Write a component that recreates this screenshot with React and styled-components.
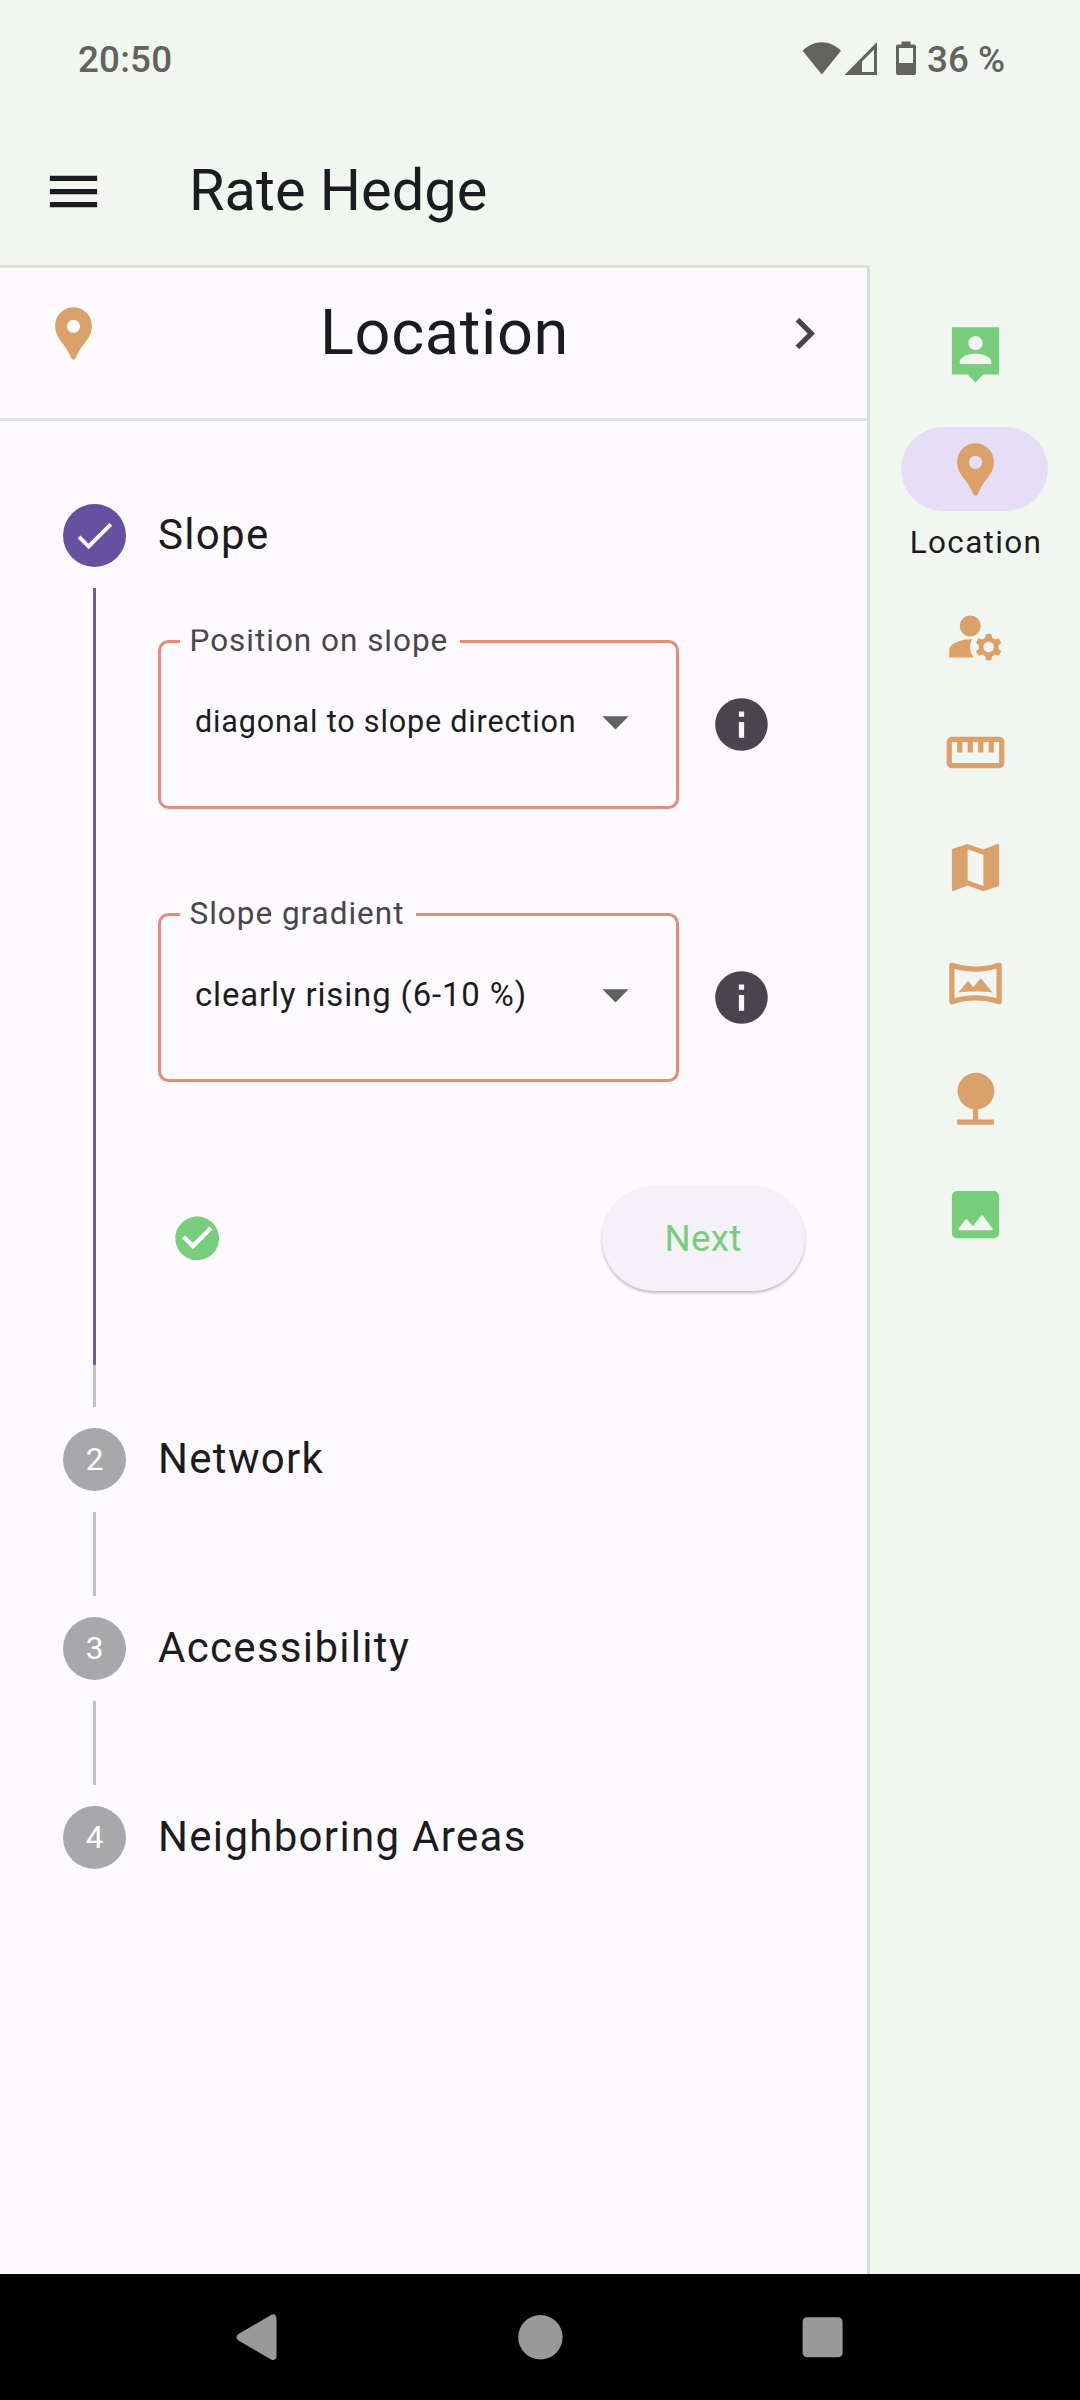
import React from "react";
import styled, { createGlobalStyle } from "styled-components";
import {
  MdMenu,
  MdLocationPin,
  MdChevronRight,
  MdArrowDropDown,
  MdInfo,
  MdCheck,
  MdCheckCircle,
  MdManageAccounts,
  MdStraighten,
  MdMap,
  MdOutlineVrpano,
  MdNature,
} from "react-icons/md";

const color = {
  surface: "#f1f6f0",
  panel: "#fdfbff",
  ink: "#1c1b1f",
  inkSoft: "#49454f",
  status: "#62625e",
  green: "#79ce7d",
  orange: "#daa16b",
  purple: "#6551a0",
  pill: "#e6def6",
  grey: "#a8a7aa",
  line: "#c2c2c2",
  divider: "#dfdfe0",
  field: "#e98a77",
};

const Global = createGlobalStyle`
  * { box-sizing: border-box; }
  body { margin: 0; background: ${color.surface}; }
  svg { display: block; flex: none; }
`;

const Screen = styled.div`
  width: 1080px;
  height: 2400px;
  display: flex;
  flex-direction: column;
  overflow: hidden;
  background: ${color.surface};
  color: ${color.ink};
  font-family: Roboto, "Liberation Sans", sans-serif;
`;

const StatusBar = styled.div`
  flex: none;
  height: 118px;
  padding: 38px 75px 0 78px;
  display: flex;
  justify-content: space-between;
  color: ${color.status};
  font-size: 36.75px;
  font-weight: 500;
  line-height: 43px;
`;

const Clock = styled.span`
  letter-spacing: 0.2px;
`;

const StatusIcons = styled.div`
  display: flex;
  align-items: flex-start;
  svg { margin-top: 3px; }
`;

const BatteryText = styled.span`
  margin-left: 11px;
`;

const AppBar = styled.header`
  flex: none;
  height: 147px;
  padding: 0 42px;
  display: flex;
  align-items: center;
  gap: 84px;
`;

const AppTitle = styled.h1`
  margin: 0 0 3px;
  font-size: 57.75px;
  font-weight: 400;
  line-height: 74px;
`;

const Body = styled.div`
  flex: 1;
  min-height: 0;
  display: flex;
`;

const Panel = styled.main`
  width: 870px;
  border-top: 3px solid ${color.divider};
  border-right: 3px solid #dadcda;
  background: ${color.panel};
`;

const PanelHeader = styled.div`
  height: 153px;
  padding: 0 31px 20px 42px;
  display: flex;
  align-items: center;
  justify-content: space-between;
  border-bottom: 3px solid ${color.divider};
`;

const PanelTitle = styled.h2`
  margin: 0 0 0 11px;
  font-size: 63px;
  font-weight: 400;
  line-height: 84px;
  letter-spacing: 0.66px;
`;

const Stepper = styled.div`
  padding: 83px 62.5px 0 63px;
  display: flex;
  flex-direction: column;
  gap: 21px;
`;

const StepHead = styled.div`
  height: 63px;
  display: flex;
  align-items: center;
  gap: 32px;
`;

const Dot = styled.span`
  flex: none;
  width: 63px;
  height: 63px;
  border-radius: 50%;
  display: flex;
  align-items: center;
  justify-content: center;
  background: ${(p) => (p.$done ? color.purple : color.grey)};
  color: #fff;
  font-size: 31.5px;
  line-height: 36px;
`;

const StepLabel = styled.span`
  margin-bottom: 1px;
  font-size: 42px;
  line-height: 60px;
  letter-spacing: 1.31px;
`;

const StepBody = styled.div`
  display: flex;
  height: ${(p) => p.$height}px;
`;

const Track = styled.div`
  flex: none;
  width: 63px;
  display: flex;
  flex-direction: column;
  align-items: center;
`;

const Segment = styled.span`
  width: 3px;
  flex: ${(p) => (p.$height ? "none" : 1)};
  height: ${(p) => (p.$height ? `${p.$height}px` : "auto")};
  background: ${(p) => (p.$done ? "#6f5ca6" : color.line)};
`;

const StepContent = styled.div`
  flex: 1;
  padding: 42px 0 0 32px;
`;

const FieldRow = styled.div`
  width: 615px;
  height: 273px;
  display: flex;
  align-items: flex-start;
  justify-content: space-between;
`;

const Field = styled.fieldset`
  width: 521px;
  height: 179px;
  min-width: 0;
  margin: 0;
  padding: 37px 29px 0 34px;
  border: 3px solid ${color.field};
  border-radius: 10.5px;
`;

const Legend = styled.legend`
  margin-left: -15px;
  padding: 0 12px 0 9.5px;
  height: 23px;
  clip-path: ${(p) => (p.$clipped ? "inset(-0.5px 0 -20px 0)" : "none")};
  color: ${color.inkSoft};
  font-size: 31.5px;
  line-height: 21px;
  letter-spacing: 0.98px;
`;

const FieldValue = styled.div`
  height: 63px;
  display: flex;
  align-items: center;
  justify-content: space-between;
  color: ${color.ink};
  font-size: ${(p) => p.$size}px;
  letter-spacing: ${(p) => p.$track}px;
  white-space: nowrap;
`;

const InfoSlot = styled.span`
  padding-top: 63px;
  color: ${color.inkSoft};
`;

const Actions = styled.div`
  height: 105px;
  margin-top: 10px;
  padding-left: 12.5px;
  display: flex;
  align-items: center;
  justify-content: space-between;
`;

const NextButton = styled.button`
  width: 203px;
  height: 105px;
  padding: 0;
  border: 0;
  border-radius: 53px;
  background: #f4f1f9;
  box-shadow: 0 2px 3px rgba(0, 0, 0, 0.26);
  color: ${color.green};
  font: 400 36.75px/52px Roboto, sans-serif;
  letter-spacing: 0.26px;
`;

const Rail = styled.nav`
  width: 210px;
  padding: 46.5px 1px 0 0;
  display: flex;
  flex-direction: column;
  align-items: center;
  gap: 31.5px;
`;

const RailItem = styled.div`
  display: flex;
  flex-direction: column;
  align-items: center;
  color: ${(p) => (p.$done ? color.green : color.orange)};
`;

const RailPill = styled.span`
  width: 147px;
  height: 84px;
  padding-left: 1px;
  border-radius: 42px;
  display: flex;
  align-items: center;
  justify-content: center;
  background: ${(p) => (p.$active ? color.pill : "transparent")};
`;

const RailLabel = styled.span`
  height: 52px;
  padding: 11px 0 0 3px;
  color: ${color.ink};
  font-size: 31.5px;
  line-height: 42px;
  letter-spacing: 1.31px;
`;

const NavBar = styled.footer`
  flex: none;
  height: 126px;
  padding: 0 230px;
  display: flex;
  align-items: center;
  justify-content: space-between;
  background: #000;
  color: #999;
`;

const WifiIcon = () => (
  <svg width="40" height="34" viewBox="0 0 40 34" fill="currentColor">
    <path d="M19.800 33.500 0.600 9.800C6 4.200 12.700 1.200 19.800 1.200S33.600 4.200 39 9.800Z" />
  </svg>
);

const SignalGlyph = styled.svg`
  margin-left: 2px;
`;

const SignalIcon = () => (
  <SignalGlyph width="34" height="34" viewBox="0 0 34 34" fill="currentColor" fillRule="evenodd">
    <path d="M33 1V34H0.500ZM30 8.500 18 20.500V31H30Z" />
  </SignalGlyph>
);

const BatteryGlyph = styled.svg`
  margin-left: 18px;
`;

const BatteryIcon = () => (
  <BatteryGlyph width="20" height="34" viewBox="0 0 20 34" fill="currentColor" fillRule="evenodd">
    <path d="M5.500 0.500h9V3.500H18a2 2 0 0 1 2 2V32a2 2 0 0 1-2 2H2a2 2 0 0 1-2-2V5.500a2 2 0 0 1 2-2H5.500ZM3 7V22H17V7Z" />
  </BatteryGlyph>
);

const PersonPinSharp = () => (
  <svg width="63" height="63" viewBox="0 0 24 24" fill="currentColor">
    <path d="M21 2H3v18h6l3 3 3-3h6V2zm-9 3.3c1.49 0 2.7 1.21 2.7 2.7s-1.21 2.7-2.7 2.7S9.3 9.49 9.3 8s1.21-2.7 2.7-2.7zM18 16H6v-.9c0-2 4-3.1 6-3.1s6 1.1 6 3.1v.9z" />
  </svg>
);

const ImageRounded = () => (
  <svg width="63" height="63" viewBox="0 0 24 24" fill="currentColor">
    <path d="M21 19V5c0-1.1-.9-2-2-2H5c-1.1 0-2 .9-2 2v14c0 1.1.9 2 2 2h14c1.1 0 2-.9 2-2zM8.9 13.98l2.1 2.53 3.1-3.99c.2-.26.6-.26.8.01l3.51 4.68c.25.33.01.8-.4.8H6.02c-.42 0-.65-.48-.39-.81L8.12 14c.19-.26.57-.27.78-.02z" />
  </svg>
);

const BackIcon = () => (
  <svg width="52" height="52" viewBox="0 0 52 52" fill="currentColor">
    <path d="M41 3.900c3-1.600 5.500.3 5.500 3.600V44.900c0 3.300-2.500 5.200-5.500 3.600L8.500 29.400c-2.600-1.500-2.600-4.900 0-6.400Z" />
  </svg>
);

const HomeIcon = () => (
  <svg width="52" height="52" viewBox="0 0 52 52" fill="currentColor">
    <circle cx="26.400" cy="26.200" r="22.200" />
  </svg>
);

const RecentsIcon = () => (
  <svg width="52" height="52" viewBox="0 0 52 52" fill="currentColor">
    <rect x="4.600" y="6.300" width="40" height="40" rx="4.500" />
  </svg>
);

const railItems = [
  { Icon: PersonPinSharp, done: true },
  { Icon: MdLocationPin, label: "Location" },
  { Icon: MdManageAccounts },
  { Icon: MdStraighten },
  { Icon: MdMap },
  { Icon: MdOutlineVrpano },
  { Icon: MdNature },
  { Icon: ImageRounded, done: true },
];

const fields = [
  { label: "Position on slope", value: "diagonal to slope direction", size: 30.5, track: 0.84, clipped: true },
  { label: "Slope gradient", value: "clearly rising (6-10 %)", size: 32.9, track: 0.88, clipped: false },
];

const steps = ["Network", "Accessibility", "Neighboring Areas"];

export default function App() {
  return (
    <Screen>
      <Global />
      <StatusBar>
        <Clock>20:50</Clock>
        <StatusIcons>
          <WifiIcon />
          <SignalIcon />
          <BatteryIcon />
          <BatteryText>36 %</BatteryText>
        </StatusIcons>
      </StatusBar>
      <AppBar>
        <MdMenu size={63} />
        <AppTitle>Rate Hedge</AppTitle>
      </AppBar>
      <Body>
        <Panel>
          <PanelHeader>
            <MdLocationPin size={63} color={color.orange} />
            <PanelTitle>Location</PanelTitle>
            <MdChevronRight size={63} color={color.inkSoft} />
          </PanelHeader>
          <Stepper>
            <StepHead>
              <Dot $done>
                <MdCheck size={47} />
              </Dot>
              <StepLabel>Slope</StepLabel>
            </StepHead>
            <StepBody $height={819}>
              <Track>
                <Segment $done />
                <Segment $height={42} />
              </Track>
              <StepContent>
                {fields.map((f) => (
                  <FieldRow key={f.label}>
                    <Field>
                      <Legend $clipped={f.clipped}>{f.label}</Legend>
                      <FieldValue $size={f.size} $track={f.track}>
                        {f.value}
                        <MdArrowDropDown size={63} color="#616161" />
                      </FieldValue>
                    </Field>
                    <InfoSlot>
                      <MdInfo size={63} />
                    </InfoSlot>
                  </FieldRow>
                ))}
                <Actions>
                  <MdCheckCircle size={52.5} color={color.green} />
                  <NextButton>Next</NextButton>
                </Actions>
              </StepContent>
            </StepBody>
            {steps.map((label, i) => (
              <React.Fragment key={label}>
                <StepHead>
                  <Dot>{i + 2}</Dot>
                  <StepLabel>{label}</StepLabel>
                </StepHead>
                {i < steps.length - 1 && (
                  <StepBody $height={84}>
                    <Track>
                      <Segment />
                    </Track>
                  </StepBody>
                )}
              </React.Fragment>
            ))}
          </Stepper>
        </Panel>
        <Rail>
          {railItems.map(({ Icon, label, done }, i) => (
            <RailItem key={i} $done={done}>
              <RailPill $active={!!label}>
                <Icon size={63} />
              </RailPill>
              {label && <RailLabel>{label}</RailLabel>}
            </RailItem>
          ))}
        </Rail>
      </Body>
      <NavBar>
        <BackIcon />
        <HomeIcon />
        <RecentsIcon />
      </NavBar>
    </Screen>
  );
}
